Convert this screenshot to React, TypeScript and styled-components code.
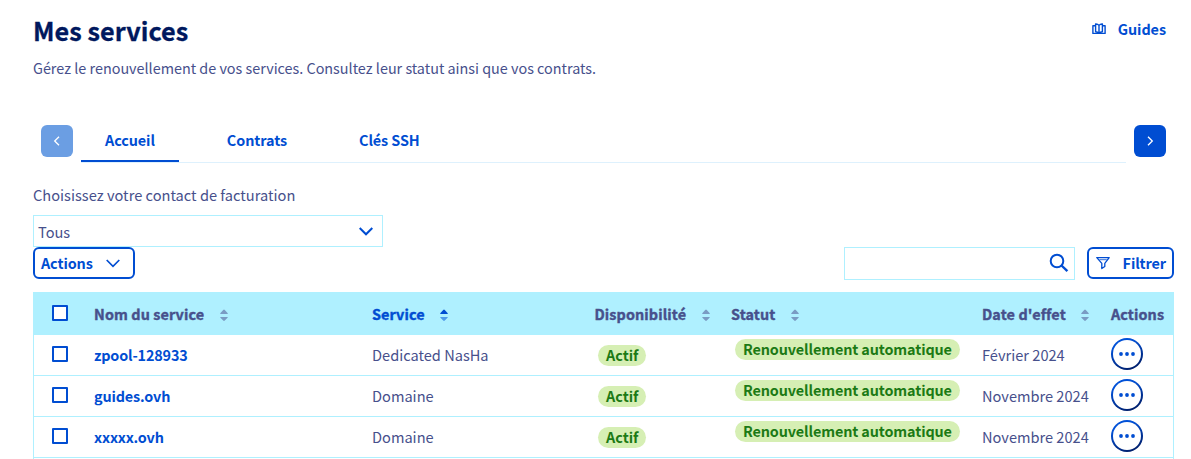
import React from "react";
import styled, { createGlobalStyle, css } from "styled-components";

const blue = "#004dd2";
const slate = "#47508c";
const cyan = "#aff0ff";

const GlobalStyle = createGlobalStyle`
  * { box-sizing: border-box; }
  body {
    margin: 0;
    background: #fff;
    color: ${slate};
    font-family: "Noto Sans CJK SC", "Noto Sans", sans-serif;
    font-size: 14.4px;
    line-height: 24px;
  }
  button { font: inherit; cursor: pointer; }
`;

const Page = styled.main`
  width: 1191px;
  height: 459px;
  overflow: hidden;
  padding: 12px 17px 0 33px;
`;

const Header = styled.header`
  display: flex;
  justify-content: space-between;
  align-items: flex-start;
  padding-right: 8px;
`;

const Title = styled.h1`
  margin: 0;
  font-size: 25.2px;
  line-height: 36px;
  font-weight: 700;
  color: #00185e;
  -webkit-text-stroke: 0.3px #00185e;
  letter-spacing: 0.06px;
`;

const GuidesLink = styled.a`
  display: flex;
  align-items: center;
  gap: 12px;
  margin-top: 5px;
  color: ${blue};
  font-weight: 700;
  letter-spacing: -0.05px;
`;

const Intro = styled.p`
  margin: 8px 0 0;
  letter-spacing: -0.01px;
`;

const TabBar = styled.nav`
  display: flex;
  gap: 8px;
  height: 38px;
  margin-top: 45px;
  padding: 0 8px;
`;

const ArrowButton = styled.button<{ $faded?: boolean }>`
  display: flex;
  align-items: center;
  justify-content: center;
  width: 32px;
  height: 32px;
  padding: 0;
  border: 0;
  border-radius: 6px;
  background: ${(p) => (p.$faded ? "#6b9ee3" : blue)};
`;

const TabList = styled.div`
  flex: 1;
  display: flex;
  gap: 24px;
  border-bottom: 1px solid #def1fd;
`;

const Tab = styled.a<{ $active?: boolean }>`
  height: 37px;
  padding: 3px 24px 0;
  color: ${blue};
  font-weight: 700;
  letter-spacing: -0.08px;
  border-bottom: 2px solid ${(p) => (p.$active ? blue : "transparent")};
`;

const FieldLabel = styled.label`
  display: block;
  margin-top: 20px;
  font-size: 14.64px;
`;

const Select = styled.div`
  display: flex;
  align-items: center;
  justify-content: space-between;
  width: 350px;
  height: 32px;
  margin-top: 8px;
  padding: 1px 9px 0 4px;
  font-size: 14.6px;
  border: 1px solid ${cyan};
`;

const Toolbar = styled.div`
  display: flex;
  height: 33px;
  gap: 12px;
`;

const OutlineButton = styled.button<{ $width: number; $start?: number; $end?: number }>`
  display: flex;
  align-items: center;
  justify-content: space-between;
  width: ${(p) => p.$width}px;
  height: 32px;
  padding: 0 ${(p) => p.$end ?? 6}px 0 ${(p) => p.$start ?? 6}px;
  border: 2px solid ${blue};
  border-radius: 6px;
  background: #fff;
  color: ${blue};
  font-weight: 700;
  letter-spacing: -0.1px;
  white-space: nowrap;
`;

const SearchBox = styled.div`
  display: flex;
  align-items: center;
  justify-content: flex-end;
  width: 231px;
  height: 33px;
  margin-left: auto;
  padding: 0 5px 1px 0;
  border: 1px solid ${cyan};
`;

const Table = styled.div`
  margin-top: 12px;
  padding-bottom: 8px;
  border: 1px solid ${cyan};
  border-bottom: 0;
`;

const rowGrid = css`
  display: grid;
  grid-template-columns: 42px 278px 222.5px 136.5px 251px 129px 1fr;
  padding-left: 18px;
`;

const HeadRow = styled.div`
  ${rowGrid}
  height: 42px;
  padding-top: 9px;
  background: ${cyan};
  font-weight: 700;
`;

const Row = styled.div`
  ${rowGrid}
  height: 41px;
  border-bottom: 1px solid ${cyan};
`;

const HeadCell = styled.div<{ $sorted?: boolean }>`
  display: flex;
  gap: 15.5px;
  white-space: nowrap;
  letter-spacing: 0.1px;
  color: ${(p) => (p.$sorted ? blue : slate)};
  -webkit-text-stroke: 0.4px currentColor;
`;

const Cell = styled.div<{ $top?: number }>`
  padding-top: ${(p) => p.$top ?? 8}px;
  white-space: nowrap;
  font-size: 14.6px;
`;

const ServiceLink = styled.a`
  color: ${blue};
  font-size: 14.4px;
  font-weight: 700;
  letter-spacing: -0.15px;
`;

const Checkbox = styled.span`
  display: block;
  width: 16px;
  height: 16px;
  border: 2px solid ${blue};
  border-radius: 1px;
  background: #fff;
`;

const Badge = styled.span`
  display: block;
  width: fit-content;
  height: 21px;
  margin-left: 4px;
  padding: 0 8px;
  border-radius: 11px;
  background: #d6efb4;
  color: #1c7a15;
  font-size: 14.4px;
  font-weight: 700;
  letter-spacing: -0.12px;
  line-height: 20px;
`;

const StartBadge = styled(Badge)`
  margin-left: 3.5px;
  letter-spacing: 0;
`;

const MenuButton = styled.button`
  display: flex;
  align-items: center;
  justify-content: center;
  width: 32px;
  height: 32px;
  padding: 0;
  border: 2px solid transparent;
  border-radius: 50%;
  background: linear-gradient(#fff, #fff) padding-box,
    linear-gradient(155deg, #0050d7 25%, #00185e 95%) border-box;
`;

const SortArrows = styled.svg`
  position: relative;
  top: 1px;
`;

const SortIcon = ({ up = "#7a9cc4", down = "#7a9cc4" }) => (
  <SortArrows width="8" height="24" viewBox="0 0 8 24">
    <path d="M0.2 11 Q0.2 10.2 0.7 9.7 L3.2 6.9 Q4 6.3 4.8 6.9 L7.3 9.7 Q7.8 10.2 7.8 11Z" fill={up} />
    <path d="M0.2 14 Q0.2 14.7 0.7 15.1 L3.2 17.6 Q4 18.2 4.8 17.6 L7.3 15.1 Q7.8 14.7 7.8 14Z" fill={down} />
  </SortArrows>
);

const ChevronDown = ({ weight = 2 }) => (
  <svg width="14" height="9" viewBox="0 0 14 9" fill="none" stroke={blue} strokeWidth={weight}>
    <path d="M0.7 1 L7 7.3 L13.3 1" />
  </svg>
);

const GuidesIcon = () => (
  <svg width="14" height="12" viewBox="0 0 14 12" fill="none" stroke={blue} strokeWidth="1.4" strokeLinejoin="round">
    <path d="M3.2 2.8H0.9V10.4H13.1V2.8H10.8" />
    <path d="M7 2.4C6 1.2 4.8.9 3.6 1V8.7C5 8.8 6 9.2 7 10.2C8 9.2 9 8.8 10.4 8.7V1C9.2.9 8 1.2 7 2.4ZM7 2V10.4" />
  </svg>
);

const SearchIcon = () => (
  <svg width="20" height="20" viewBox="0 0 20 20" fill="none" stroke={blue} strokeWidth="2">
    <circle cx="8" cy="8" r="6.3" />
    <path d="M12.5 12.5 L18.4 18.2" strokeWidth="2.4" />
  </svg>
);

const FilterIcon = () => (
  <svg width="14" height="14" viewBox="0 0 14 14" fill="none" stroke={blue} strokeWidth="1.3" strokeLinejoin="round">
    <path d="M0.8 1.6H13.2L8.8 7.4V10.4L5.8 12.6V7.4Z" />
    <path d="M3.4 3.7H10.8" strokeWidth="0.8" />
  </svg>
);

const DotsIcon = () => (
  <svg width="18" height="6" viewBox="0 0 18 6" fill={blue}>
    <circle cx="3" cy="3" r="1.9" />
    <circle cx="9" cy="3" r="1.9" />
    <circle cx="15" cy="3" r="1.9" />
  </svg>
);

const services = [
  { name: "zpool-128933", type: "Dedicated NasHa", date: "Février 2024" },
  { name: "guides.ovh", type: "Domaine", date: "Novembre 2024" },
  { name: "xxxxx.ovh", type: "Domaine", date: "Novembre 2024" },
];

export default function App() {
  return (
    <Page>
      <GlobalStyle />
      <Header>
        <Title>Mes services</Title>
        <GuidesLink>
          <GuidesIcon />
          Guides
        </GuidesLink>
      </Header>
      <Intro>Gérez le renouvellement de vos services. Consultez leur statut ainsi que vos contrats.</Intro>

      <TabBar>
        <ArrowButton $faded aria-label="Précédent">
          <svg width="8" height="10" viewBox="0 0 8 10" fill="none" stroke="#fff" strokeWidth="1.3">
            <path d="M6 0.7 L1.7 5 L6 9.3" />
          </svg>
        </ArrowButton>
        <TabList>
          <Tab $active>Accueil</Tab>
          <Tab>Contrats</Tab>
          <Tab>Clés SSH</Tab>
        </TabList>
        <ArrowButton aria-label="Suivant">
          <svg width="8" height="10" viewBox="0 0 8 10" fill="none" stroke="#fff" strokeWidth="1.3">
            <path d="M2 0.7 L6.3 5 L2 9.3" />
          </svg>
        </ArrowButton>
      </TabBar>

      <FieldLabel>Choisissez votre contact de facturation</FieldLabel>
      <Select>
        Tous
        <ChevronDown />
      </Select>

      <Toolbar>
        <OutlineButton $width={102} $end={13}>
          Actions
          <ChevronDown weight={1.7} />
        </OutlineButton>
        <SearchBox>
          <SearchIcon />
        </SearchBox>
        <OutlineButton $width={87} $start={7}>
          <FilterIcon />
          Filtrer
        </OutlineButton>
      </Toolbar>

      <Table>
        <HeadRow>
          <Cell $top={3}>
            <Checkbox />
          </Cell>
          <HeadCell>
            Nom du service
            <SortIcon />
          </HeadCell>
          <HeadCell $sorted>
            Service
            <SortIcon up={blue} down="#4f9bea" />
          </HeadCell>
          <HeadCell>
            Disponibilité
            <SortIcon />
          </HeadCell>
          <HeadCell>
            Statut
            <SortIcon />
          </HeadCell>
          <HeadCell>
            Date d'effet
            <SortIcon />
          </HeadCell>
          <HeadCell>Actions</HeadCell>
        </HeadRow>
        {services.map((s) => (
          <Row key={s.name}>
            <Cell $top={11}>
              <Checkbox />
            </Cell>
            <Cell>
              <ServiceLink>{s.name}</ServiceLink>
            </Cell>
            <Cell>{s.type}</Cell>
            <Cell $top={10}>
              <StartBadge>Actif</StartBadge>
            </Cell>
            <Cell $top={4}>
              <Badge>Renouvellement automatique</Badge>
            </Cell>
            <Cell>{s.date}</Cell>
            <Cell $top={3}>
              <MenuButton aria-label="Actions">
                <DotsIcon />
              </MenuButton>
            </Cell>
          </Row>
        ))}
      </Table>
    </Page>
  );
}
